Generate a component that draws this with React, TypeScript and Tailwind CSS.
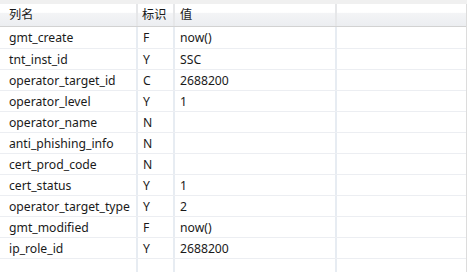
const rows: [string, string, string][] = [
  ['gmt_create', 'F', 'now()'],
  ['tnt_inst_id', 'Y', 'SSC'],
  ['operator_target_id', 'C', '2688200'],
  ['operator_level', 'Y', '1'],
  ['operator_name', 'N', ''],
  ['anti_phishing_info', 'N', ''],
  ['cert_prod_code', 'N', ''],
  ['cert_status', 'Y', '1'],
  ['operator_target_type', 'Y', '2'],
  ['gmt_modified', 'F', 'now()'],
  ['ip_role_id', 'Y', '2688200'],
  ['', '', ''],
];

const font = { fontFamily: '"Noto Sans", "Noto Sans CJK SC", sans-serif' };

export default function App() {
  return (
    <div className="w-[467px] h-[272px] overflow-hidden bg-white text-[12.2px] text-[#1a1a1a]" style={font}>
      <div className="h-[4px] bg-[#f0f0f0]" />
      <div className="flex border-r border-[#dcdcdc]">
        <div className="flex flex-col">
          {/* header */}
          <div className="flex h-[23px] border-b border-[#d2d2d2] bg-[linear-gradient(to_bottom,#ffffff_0%,#ffffff_38%,#f3f4f6_42%,#eceef1_100%)]">
            <div className="w-[138px] pl-[9px] border-r-2 border-[#e6e7e9] flex items-center">列名</div>
            <div className="w-[37px] pl-[4px] border-r-2 border-[#e6e7e9] flex items-center">标识</div>
            <div className="w-[162px] pl-[5px] border-r-2 border-[#e6e7e9] flex items-center">值</div>
            <div className="w-[129px]" />
          </div>
          {rows.map((r, i) => (
            <div
              key={i}
              className={`flex border-b border-[#eceef2] ${i === 0 ? 'h-[22px]' : 'h-[21px]'}`}
            >
              <div className="w-[138px] pl-[9px] pt-[2px] border-r-2 border-[#e7ecf2] flex items-center">{r[0]}</div>
              <div className="w-[37px] pl-[5px] pt-[2px] border-r-2 border-[#e7ecf2] flex items-center">{r[1]}</div>
              <div className="w-[162px] pl-[5px] pt-[2px] border-r-2 border-[#e7ecf2] flex items-center">{r[2]}</div>
              <div className="w-[129px]" />
            </div>
          ))}
        </div>
      </div>
    </div>
  );
}
